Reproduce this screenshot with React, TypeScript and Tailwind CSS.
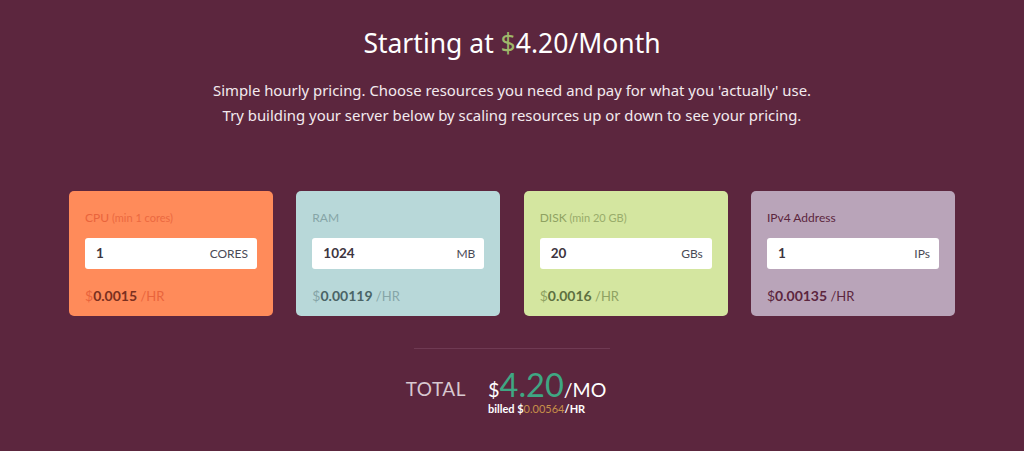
import React from "react";

type Card = {
  label: string;
  sub?: string;
  value: string;
  unit: string;
  price: string;
  bg: string;
  labelCls: string;
  dollarCls: string;
  priceCls: string;
  hrCls: string;
};

const cards: Card[] = [
  {
    label: "CPU",
    sub: "(min 1 cores)",
    value: "1",
    unit: "CORES",
    price: "0.0015",
    bg: "bg-[#ff8b5a]",
    labelCls: "text-[#e9643c]",
    dollarCls: "text-[#e9643c]",
    priceCls: "text-[#7a3020]",
    hrCls: "text-[#e9643c]",
  },
  {
    label: "RAM",
    value: "1024",
    unit: "MB",
    price: "0.00119",
    bg: "bg-[#b8d8d9]",
    labelCls: "text-[#86a5a7]",
    dollarCls: "text-[#86a5a7]",
    priceCls: "text-[#4a6466]",
    hrCls: "text-[#86a5a7]",
  },
  {
    label: "DISK",
    sub: "(min 20 GB)",
    value: "20",
    unit: "GBs",
    price: "0.0016",
    bg: "bg-[#d4e6a0]",
    labelCls: "text-[#8fa262]",
    dollarCls: "text-[#8fa262]",
    priceCls: "text-[#5e7040]",
    hrCls: "text-[#8fa262]",
  },
  {
    label: "IPv4 Address",
    value: "1",
    unit: "IPs",
    price: "0.00135",
    bg: "bg-[#b9a4b9]",
    labelCls: "text-[#5c263e]",
    dollarCls: "text-[#5c263e]",
    priceCls: "text-[#5c263e]",
    hrCls: "text-[#5c263e]",
  },
];

export default function App() {
  return (
    <div className="w-[1024px] h-[451px] bg-[#5c263e] text-white flex flex-col items-center overflow-hidden" style={{ fontFamily: '"Noto Sans", sans-serif' }}>
      <h1 className="mt-[27px] text-[26.5px] leading-[32px] font-normal">
        Starting at <span className="text-[#9fb86a]">$</span>4.20/Month
      </h1>
      <div className="mt-[19px] text-[14.9px] leading-[25px] text-center text-[#f3eaee]">
        <p>Simple hourly pricing. Choose resources you need and pay for what you 'actually' use.</p>
        <p>Try building your server below by scaling resources up or down to see your pricing.</p>
      </div>
      <div className="mt-[63px] flex gap-[23.3px]" style={{ fontFamily: '"Lato", sans-serif' }}>
        {cards.map((c) => (
          <div key={c.label} className={`${c.bg} w-[204px] h-[125px] rounded-[5px] px-[16px] pt-[19px] flex flex-col`}>
            <div className={`text-[12px] leading-[16px] ${c.labelCls}`}>
              {c.label}
              {c.sub && <span className="text-[11px] opacity-85"> {c.sub}</span>}
            </div>
            <div className="mt-[12px] h-[31px] w-[172px] bg-white rounded-[3px] flex items-center justify-between pl-[11px] pr-[9px]">
              <span className="text-[13.5px] font-bold text-[#3d3540]">{c.value}</span>
              <span className="text-[12px] text-[#4a4a55]">{c.unit}</span>
            </div>
            <div className="mt-[18px] text-[14px] leading-[18px]">
              <span className={c.dollarCls}>$</span>
              <span className={`font-bold ${c.priceCls}`}>{c.price}</span>
              <span className={`text-[13px] ${c.hrCls}`}> /HR</span>
            </div>
          </div>
        ))}
      </div>
      <div className="mt-[32px] w-[196px] h-px bg-[#6f3a53]" />
      <div className="mt-[23px] flex items-start pr-[12px]" style={{ fontFamily: '"Lato", sans-serif' }}>
        <div className="mt-[5px] text-[19px] leading-[24px] text-[#d8c8d0] tracking-[0.5px] mr-[22px]">TOTAL</div>
        <div className="flex flex-col">
          <div className="flex items-baseline leading-[26px] h-[26px]">
            <span className="text-[20px] text-white">$</span>
            <span className="text-[32.5px] text-[#3fa783]">4.20</span>
            <span className="text-[19.5px] text-white">/MO</span>
          </div>
          <div className="mt-[4px] text-[11px] leading-[13px] font-bold text-white">
            billed $<span className="font-normal text-[#c7904a]">0.00564</span>/HR
          </div>
        </div>
      </div>
    </div>
  );
}
